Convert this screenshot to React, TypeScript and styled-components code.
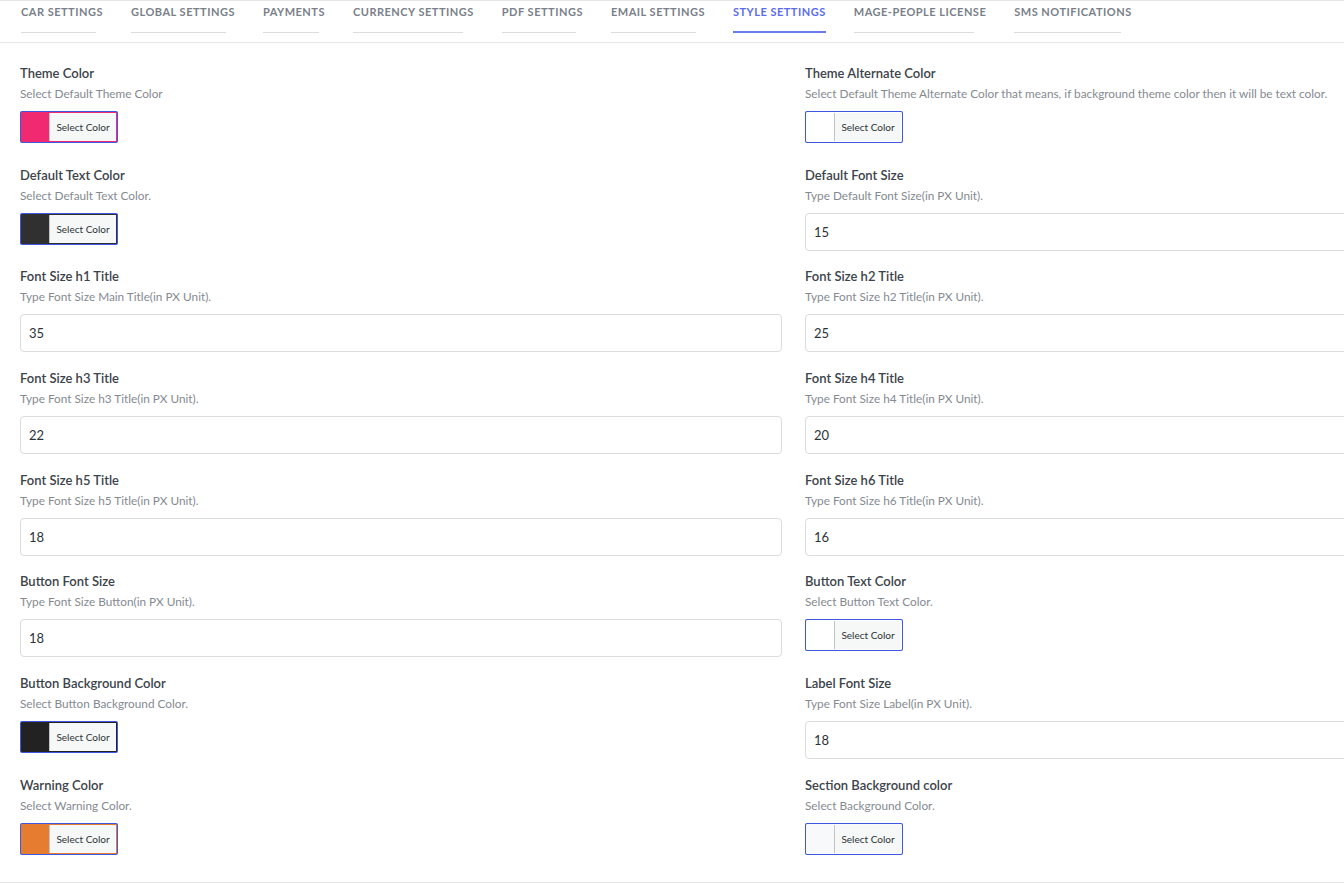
import styled, { createGlobalStyle } from "styled-components";

type Field =
  | { kind: "color"; label: string; desc: string; color: string }
  | { kind: "input"; label: string; desc: string; value: string };

const tabs = [
  "Car Settings",
  "Global Settings",
  "Payments",
  "Currency Settings",
  "PDF Settings",
  "Email Settings",
  "Style Settings",
  "Mage-People License",
  "SMS Notifications",
];

const fields: Field[] = [
  { kind: "color", label: "Theme Color", desc: "Select Default Theme Color", color: "#f12971" },
  {
    kind: "color",
    label: "Theme Alternate Color",
    desc: "Select Default Theme Alternate Color that means, if background theme color then it will be text color.",
    color: "#ffffff",
  },
  { kind: "color", label: "Default Text Color", desc: "Select Default Text Color.", color: "#303030" },
  { kind: "input", label: "Default Font Size", desc: "Type Default Font Size(in PX Unit).", value: "15" },
  { kind: "input", label: "Font Size h1 Title", desc: "Type Font Size Main Title(in PX Unit).", value: "35" },
  { kind: "input", label: "Font Size h2 Title", desc: "Type Font Size h2 Title(in PX Unit).", value: "25" },
  { kind: "input", label: "Font Size h3 Title", desc: "Type Font Size h3 Title(in PX Unit).", value: "22" },
  { kind: "input", label: "Font Size h4 Title", desc: "Type Font Size h4 Title(in PX Unit).", value: "20" },
  { kind: "input", label: "Font Size h5 Title", desc: "Type Font Size h5 Title(in PX Unit).", value: "18" },
  { kind: "input", label: "Font Size h6 Title", desc: "Type Font Size h6 Title(in PX Unit).", value: "16" },
  { kind: "input", label: "Button Font Size", desc: "Type Font Size Button(in PX Unit).", value: "18" },
  { kind: "color", label: "Button Text Color", desc: "Select Button Text Color.", color: "#ffffff" },
  { kind: "color", label: "Button Background Color", desc: "Select Button Background Color.", color: "#222222" },
  { kind: "input", label: "Label Font Size", desc: "Type Font Size Label(in PX Unit).", value: "18" },
  { kind: "color", label: "Warning Color", desc: "Select Warning Color.", color: "#e67c30" },
  { kind: "color", label: "Section Background color", desc: "Select Background Color.", color: "#f8f9fa" },
];

const App = () => {
  return (
    <>
      <GlobalStyle />
      <Page>
        <TabBar>
          {tabs.map((t) => (
            <Tab key={t} $active={t === "Style Settings"}>
              {t}
            </Tab>
          ))}
        </TabBar>
        <Grid>
          {fields.map((f) => (
            <FieldBox key={f.label}>
              <Label>{f.label}</Label>
              <Desc>{f.desc}</Desc>
              <Control>
                {f.kind === "color" ? (
                  <ColorButton $color={f.color} type="button">
                    <ColorText>Select Color</ColorText>
                  </ColorButton>
                ) : (
                  <TextInput type="text" defaultValue={f.value} />
                )}
              </Control>
            </FieldBox>
          ))}
        </Grid>
      </Page>
    </>
  );
};

const GlobalStyle = createGlobalStyle`
  html, body {
    margin: 0;
    padding: 0;
    background: #fff;
    overflow: hidden;
  }
  body {
    font-family: Lato, "Open Sans", sans-serif;
  }
`;

const Page = styled.main`
  width: 1600px;
  border-top: 1px solid #e6e6e6;
`;

const TabBar = styled.nav`
  display: flex;
  gap: 28px;
  padding: 0 20px 0 21px;
  height: 41px;
  border-bottom: 1px solid #e4e4e4;
`;

const Tab = styled.div<{ $active?: boolean }>`
  position: relative;
  height: 32px;
  padding-top: 4px;
  box-sizing: border-box;
  font-size: 11px;
  font-weight: 700;
  letter-spacing: 0.5px;
  text-transform: uppercase;
  color: ${(p) => (p.$active ? "#5b6cea" : "#7a7f89")};
  white-space: nowrap;
  &::after {
    content: "";
    position: absolute;
    left: 0;
    bottom: 0;
    height: ${(p) => (p.$active ? "2px" : "1px")};
    width: ${(p) => (p.$active ? "100%" : "91%")};
    background: ${(p) => (p.$active ? "#6a7bea" : "#dcdcde")};
  }
`;

const Grid = styled.section`
  display: grid;
  grid-template-columns: 762px 762px;
  column-gap: 23px;
  padding: 20px 20px 5px;
  border-bottom: 1px solid #e6e6e6;
`;

const FieldBox = styled.div`
  display: flex;
  flex-direction: column;
  height: 101.7px;
`;

const Label = styled.div`
  font-size: 13px;
  font-weight: 600;
  line-height: 20px;
  color: #3c434a;
`;

const Desc = styled.div`
  margin-top: 2px;
  font-size: 11.8px;
  line-height: 18px;
  color: #858a91;
`;

const Control = styled.div`
  margin-top: 8px;
`;

const ColorButton = styled.button<{ $color: string }>`
  display: flex;
  width: 96px;
  height: 30px;
  margin: 1px;
  padding: 0 0 0 27px;
  box-sizing: border-box;
  border: 1px solid ${(p) => p.$color};
  box-shadow: 0 0 0 1px #3e58e2;
  border-radius: 1px;
  background: ${(p) => p.$color};
  cursor: pointer;
`;

const ColorText = styled.span`
  flex: 1;
  display: flex;
  align-items: center;
  justify-content: center;
  background: #f6f7f7;
  border-left: 1px solid #c3c4c7;
  font-family: Lato, sans-serif;
  font-size: 10px;
  color: #2c3338;
`;

const TextInput = styled.input`
  width: 100%;
  height: 38px;
  box-sizing: border-box;
  border: 1px solid #dcdcde;
  border-radius: 4px;
  padding: 0 8px;
  font-family: Lato, sans-serif;
  font-size: 13px;
  color: #2c3338;
  outline: none;
`;

export default App;
